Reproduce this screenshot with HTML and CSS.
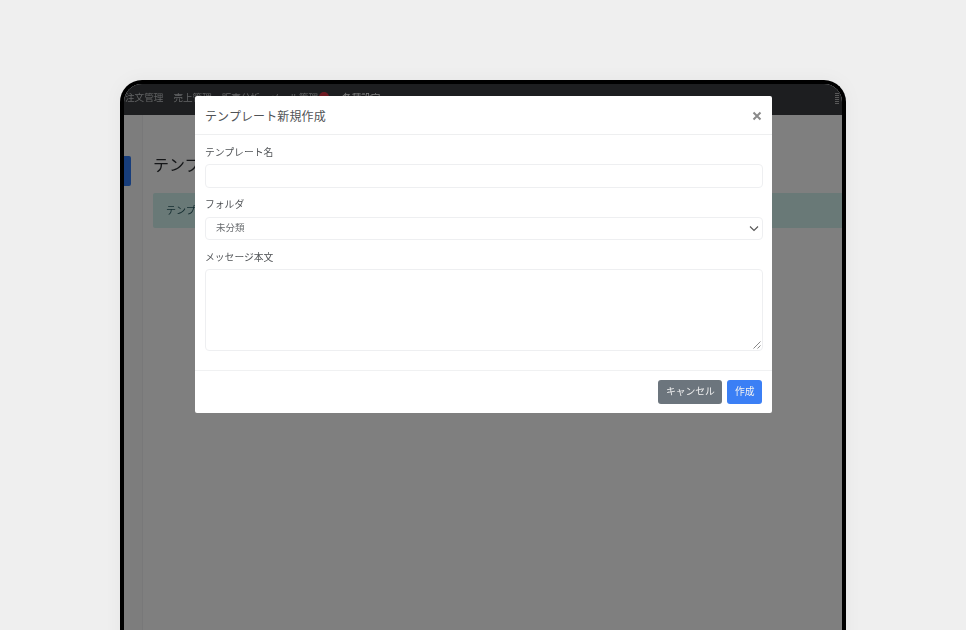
FILE: index.html
```html
<!DOCTYPE html>
<html lang="ja">
<head>
<meta charset="utf-8">
<title>テンプレート新規作成</title>
<link rel="stylesheet" href="styles.css">
</head>
<body>
<div class="stage">
  <div class="device">
    <nav class="nav">
      <span class="nav-item">注文管理</span>
      <span class="nav-item">売上管理</span>
      <span class="nav-item">販売分析</span>
      <span class="nav-item nav-mail">メール管理<span class="badge"></span></span>
      <span class="nav-item nav-active">各種設定 ▾</span>
      <span class="nav-menu"></span>
    </nav>
    <div class="content">
      <div class="sidebar"><span class="side-tab"></span></div>
      <main class="main">
        <h1 class="title">テンプ</h1>
        <div class="alert">テンプ</div>
      </main>
    </div>
    <div class="backdrop"></div>
  </div>
  <section class="modal">
    <header class="modal-head">
      <h2 class="modal-title">テンプレート新規作成</h2>
      <svg class="close" width="10" height="10" viewBox="0 0 10 10"><path d="M1.5 1.5l7 7M8.5 1.5l-7 7"/></svg>
    </header>
    <div class="modal-body">
      <label class="field-label">テンプレート名</label>
      <div class="input"></div>
      <label class="field-label">フォルダ</label>
      <div class="input select">
        <span class="select-value">未分類</span>
        <svg class="chev" width="10" height="7" viewBox="0 0 10 7"><path d="M1 1.5l4 4 4-4"/></svg>
      </div>
      <label class="field-label">メッセージ本文</label>
      <div class="input textarea">
        <svg class="grip" width="8" height="8" viewBox="0 0 8 8"><path d="M0.5 7.5l7-7M4.5 7.5l3-3"/></svg>
      </div>
    </div>
    <footer class="modal-foot">
      <span class="btn btn-gray">キャンセル</span>
      <span class="btn btn-blue">作成</span>
    </footer>
  </section>
</div>
</body>
</html>
```
FILE: styles.css
```css
* { box-sizing: border-box; }
html, body { margin: 0; background: #fff; }
body {
  font-family: "Noto Sans CJK JP", "Noto Sans", sans-serif;
  height: 642px;
  overflow: hidden;
}
.stage {
  position: relative;
  height: 630px;
  padding: 80px 0 0 120px;
  background: #efefef;
  overflow: hidden;
}
.device {
  position: relative;
  width: 726px;
  height: 600px;
  border: solid #000;
  border-width: 4px 4px 0;
  border-radius: 22px 22px 0 0;
  overflow: hidden;
  background: #fff;
  filter: blur(0.35px) drop-shadow(0 0 8px rgba(0, 0, 0, 0.04));
}
.nav {
  display: flex;
  align-items: center;
  gap: 10px;
  height: 31px;
  padding: 0 3px 6px 1px;
  background: #3a3d40;
  font-size: 9.6px;
  color: #c4c6c8;
  white-space: nowrap;
}
.badge {
  display: inline-block;
  width: 10px;
  height: 10px;
  margin-left: 1px;
  border-radius: 50%;
  background: #dc3545;
  vertical-align: -1px;
}
.nav-active { color: #fff; margin-left: 3px; }
.nav-menu {
  width: 4px;
  height: 12px;
  margin: 4px 0 0 auto;
  background: repeating-linear-gradient(#b0b0b0 0 1px, transparent 1px 2px);
}
.content {
  display: flex;
  height: 569px;
  background: #fff;
}
.sidebar {
  flex: none;
  width: 19px;
  padding-top: 41px;
  border-right: 1px solid #f0f1f2;
  background: #fbfbfb;
}
.side-tab {
  display: block;
  width: 7px;
  height: 30px;
  border-radius: 0 2px 2px 0;
  background: #2f7bf6;
}
.main {
  flex: 1;
  padding: 37px 0 0 10px;
}
.title {
  margin: 0 0 17px;
  font-size: 16px;
  font-weight: 400;
  line-height: 24px;
  color: #2a2d30;
}
.alert {
  height: 35px;
  padding: 0 13px;
  border-radius: 2px 0 0 2px;
  background: #d2f2ee;
  font-size: 10px;
  line-height: 34px;
  color: #2a5a60;
}
.backdrop {
  position: absolute;
  inset: 0;
  background: rgba(0, 0, 0, 0.5);
}
.modal {
  position: absolute;
  left: 195px;
  top: 96px;
  width: 577px;
  height: 317px;
  display: flex;
  flex-direction: column;
  background: #fff;
  border-radius: 2px;
  color: #4a4d50;
  filter: blur(0.3px);
}
.modal-head {
  display: flex;
  align-items: center;
  justify-content: space-between;
  height: 39px;
  padding: 1px 10px 0;
  border-bottom: 1px solid #eeeff0;
}
.modal-title {
  margin: 0;
  font-size: 12px;
  font-weight: 400;
  letter-spacing: 0.01em;
  color: #505356;
}
.close { fill: none; stroke: #8a8a8a; stroke-width: 2; }
.modal-body {
  flex: 1;
  padding: 10px 9.5px 0 10px;
}
.field-label {
  display: block;
  height: 19px;
  font-size: 9.8px;
  line-height: 14px;
  color: #505356;
}
.input {
  height: 24px;
  margin-bottom: 9px;
  border: 1px solid #eeeff1;
  border-radius: 4px;
  background: #fff;
}
.select {
  display: flex;
  align-items: center;
  justify-content: space-between;
  height: 23px;
  padding: 0 3px 0 10px;
  margin-bottom: 10px;
  font-size: 9.5px;
  color: #6a6d70;
}
.field-label + .select { margin-top: 1px; }
.select-value { line-height: 19px; margin-bottom: 2px; }
.chev { fill: none; stroke: #555; stroke-width: 1.1; }
.textarea {
  position: relative;
  height: 82px;
  margin-bottom: 0;
}
.grip {
  position: absolute;
  right: 1px;
  bottom: 1px;
  fill: none;
  stroke: #888;
  stroke-width: 1;
}
.modal-foot {
  display: flex;
  justify-content: flex-end;
  align-items: center;
  gap: 5px;
  height: 43px;
  padding: 0 10px;
  border-top: 1px solid #f0f1f2;
}
.btn {
  height: 24px;
  padding: 0 7.5px;
  border-radius: 3px;
  font-size: 9.8px;
  line-height: 23px;
  color: #f2f2f2;
}
.btn-gray { background: #6c757d; }
.btn-blue { background: #3b7ff5; }
```
